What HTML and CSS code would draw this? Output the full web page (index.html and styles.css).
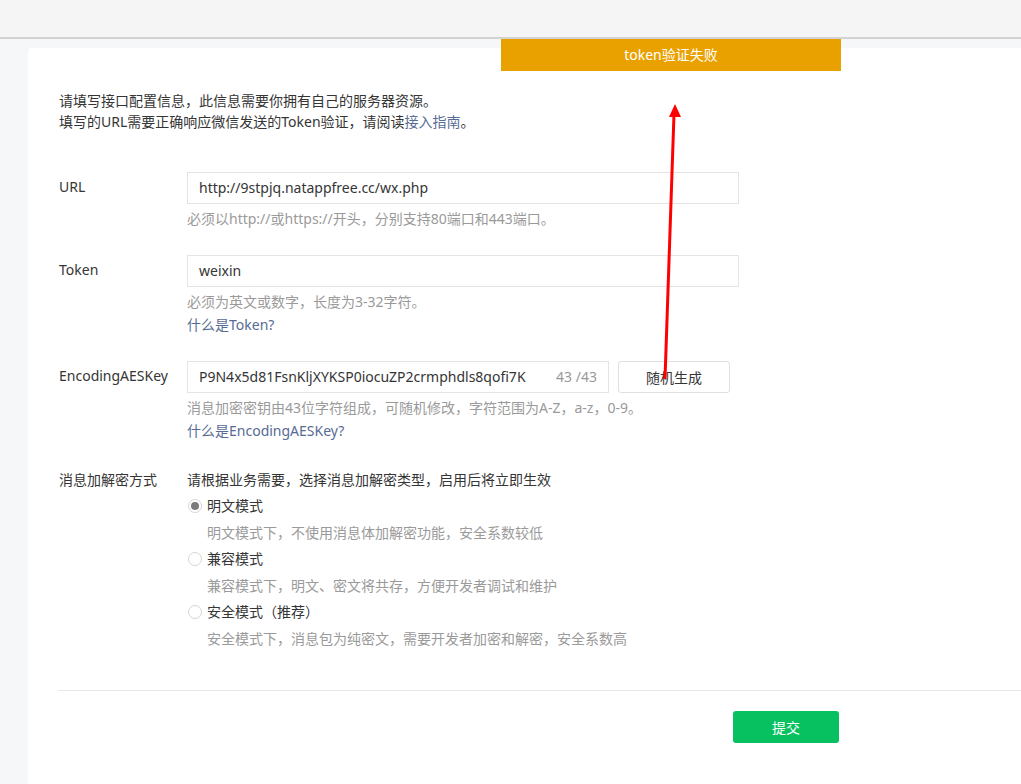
FILE: index.html
```html
<!DOCTYPE html>
<html lang="zh-CN">
<head>
<meta charset="utf-8">
<title>服务器配置</title>
<link rel="stylesheet" href="styles.css">
</head>
<body>
<div class="topbar"></div>
<div class="page">
  <div class="card">
    <p class="intro">请填写接口配置信息，此信息需要你拥有自己的服务器资源。<br>填写的URL需要正确响应微信发送的Token验证，请阅读<a class="link" href="#">接入指南</a>。</p>
    <div class="form">
      <div class="row">
        <div class="lbl">URL</div>
        <div class="field">
          <div class="input wide">http://9stpjq.natappfree.cc/wx.php</div>
          <p class="hint">必须以http://或https://开头，分别支持80端口和443端口。</p>
        </div>
      </div>
      <div class="row">
        <div class="lbl">Token</div>
        <div class="field">
          <div class="input wide">weixin</div>
          <p class="hint">必须为英文或数字，长度为3-32字符。</p>
          <a class="link block" href="#">什么是Token?</a>
        </div>
      </div>
      <div class="row">
        <div class="lbl">EncodingAESKey</div>
        <div class="field">
          <div class="inline">
            <div class="input narrow"><span class="val">P9N4x5d81FsnKljXYKSP0iocuZP2crmphdls8qofi7K</span><span class="count">43 /43</span></div>
            <button class="btn">随机生成</button>
          </div>
          <p class="hint">消息加密密钥由43位字符组成，可随机修改，字符范围为A-Z，a-z，0-9。</p>
          <a class="link block" href="#">什么是EncodingAESKey?</a>
        </div>
      </div>
      <div class="row mode">
        <div class="lbl plain">消息加解密方式</div>
        <div class="field">
          <p class="desc">请根据业务需要，选择消息加解密类型，启用后将立即生效</p>
          <div class="radios">
            <div class="opt"><span class="radio checked"></span>明文模式</div>
            <div class="sub">明文模式下，不使用消息体加解密功能，安全系数较低</div>
            <div class="opt"><span class="radio"></span>兼容模式</div>
            <div class="sub">兼容模式下，明文、密文将共存，方便开发者调试和维护</div>
            <div class="opt"><span class="radio"></span>安全模式（推荐）</div>
            <div class="sub">安全模式下，消息包为纯密文，需要开发者加密和解密，安全系数高</div>
          </div>
        </div>
      </div>
    </div>
    <div class="footer">
      <button class="submit">提交</button>
    </div>
  </div>
</div>
<div class="toast">token验证失败</div>
<svg class="arrow" width="1021" height="784" viewBox="0 0 1021 784">
  <line x1="665" y1="379" x2="674" y2="114" stroke="#ff0000" stroke-width="3"/>
  <polygon points="675,104 669,117 681,117" fill="#ff0000"/>
</svg>
</body>
</html>
```

FILE: styles.css
```css
* { box-sizing: border-box; }
html, body { margin: 0; padding: 0; }
body {
  font-family: "Noto Sans", "Noto Sans CJK SC", sans-serif;
  font-size: 14px;
  color: #353535;
  background: #f6f7f9;
  overflow: hidden;
  height: 784px;
}
.topbar {
  height: 39px;
  background: #f5f5f5;
  border-bottom: 2px solid #d3d3d5;
}
.page {
  padding: 9px 0 0 28px;
}
.card {
  background: #fff;
  border-radius: 4px 0 0 0;
  width: 993px;
  min-height: 760px;
  padding: 42px 0 0 31px;
}
.intro {
  margin: 0;
  line-height: 21px;
}
.link {
  color: #576b95;
  text-decoration: none;
}
.link.block {
  display: block;
  line-height: 21px;
  margin-top: 2px;
}
.form { margin-top: 40px; }
.row {
  display: flex;
  margin-bottom: 26px;
}
.row.mode { margin-top: 28px; margin-bottom: 0; }
.lbl {
  width: 128px;
  flex: none;
  line-height: 21px;
  padding-top: 4px;
}
.lbl.plain { padding-top: 0; }
.field { flex: none; }
.input {
  height: 32px;
  border: 1px solid #e4e4e4;
  padding: 0 11px;
  line-height: 30px;
  color: #353535;
}
.input.wide { width: 552px; }
.input.narrow {
  width: 422px;
  display: flex;
  justify-content: space-between;
}
.count { color: #9a9a9a; }
.inline { display: flex; align-items: flex-start; }
.btn {
  margin-left: 9px;
  width: 112px;
  height: 32px;
  background: #fff;
  border: 1px solid #e0e0e0;
  border-radius: 3px;
  font: inherit;
  color: #353535;
  padding: 0;
}
.hint {
  margin: 4px 0 0;
  line-height: 21px;
  color: #9a9a9a;
}
.desc {
  margin: 0;
  line-height: 21px;
}
.radios { margin-top: 3px; }
.opt, .sub {
  line-height: 26.5px;
  height: 26.5px;
}
.opt {
  display: flex;
  align-items: center;
}
.sub {
  padding-left: 20px;
  color: #9a9a9a;
}
.radio {
  width: 14px;
  height: 14px;
  border: 1px solid #d6d6d6;
  border-radius: 50%;
  margin: 0 5px 0 1px;
  background: #fff;
  position: relative;
  flex: none;
}
.radio.checked::after {
  content: "";
  position: absolute;
  left: 2px;
  top: 2px;
  width: 8px;
  height: 8px;
  border-radius: 50%;
  background: #7b7b7b;
}
.footer {
  margin-top: 38px;
  margin-left: -1px;
  border-top: 1px solid #e7e7eb;
  padding: 20px 0 0 675px;
}
.submit {
  width: 106px;
  height: 32px;
  background: #07c160;
  color: #fff;
  border: none;
  border-radius: 3px;
  font: inherit;
  padding: 0;
}
.toast {
  position: absolute;
  left: 501px;
  top: 39px;
  width: 340px;
  height: 32px;
  line-height: 32px;
  background: #e9a100;
  color: #fff;
  text-align: center;
  font-size: 14px;
}
.arrow {
  position: absolute;
  left: 0;
  top: 0;
  pointer-events: none;
}
```
